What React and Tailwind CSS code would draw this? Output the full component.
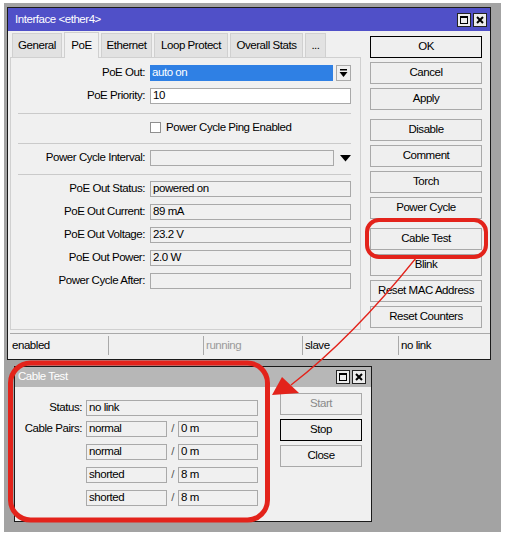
import React from 'react';

const font =
  "font-['Liberation_Sans',Arial,sans-serif] text-[11.5px] tracking-[-0.45px] leading-none whitespace-nowrap";

const Btn = ({ children, def, dim }) => (
  <div
    className={`h-[22px] flex items-center justify-center border bg-[#efefef] ${
      def ? 'border-black' : 'border-[#a9a9a9]'
    } ${dim ? 'text-[#8a8a8a]' : 'text-black'}`}
  >
    {children}
  </div>
);

const Field = ({ children, className = '', white }) => (
  <div
    className={`h-[16px] flex items-center px-[2px] border border-[#a9a9a9] ${
      white ? 'bg-white' : 'bg-[#f0f0f0]'
    } ${className}`}
  >
    {children}
  </div>
);

const WinButtons = () => (
  <div className="flex gap-[2px]">
    <div className="w-[14px] h-[14px] border border-[#222] bg-[#ececec] flex items-center justify-center">
      <div className="w-[8px] h-[8px] border border-black border-t-2" />
    </div>
    <div className="w-[14px] h-[14px] border border-[#222] bg-[#ececec] flex items-center justify-center">
      <svg width="8" height="8" viewBox="0 0 8 8">
        <path d="M1 1L7 7M7 1L1 7" stroke="#000" strokeWidth="2" />
      </svg>
    </div>
  </div>
);

const Sep = () => <div className="ml-[7px] w-[333px] h-px bg-[#cacaca]" />;

const Row = ({ label, children, className = '' }) => (
  <div className={`flex items-center ${className}`}>
    <div className="w-[135px] text-right pr-[1px]">{label}</div>
    <div className="ml-[4px] flex items-center">{children}</div>
  </div>
);

const tabs = [
  ['General', 50],
  ['PoE', 35],
  ['Ethernet', 51],
  ['Loop Protect', 74],
  ['Overall Stats', 73],
  ['...', 21],
];

const actions = [
  ['OK', 0, true],
  ['Cancel', 4],
  ['Apply', 4],
  ['Disable', 9],
  ['Comment', 4],
  ['Torch', 4],
  ['Power Cycle', 4],
  ['Cable Test', 9],
  ['Blink', 4],
  ['Reset MAC Address', 4],
  ['Reset Counters', 4],
];

const readouts = [
  ['PoE Out Status:', 'powered on'],
  ['PoE Out Current:', '89 mA'],
  ['PoE Out Voltage:', '23.2 V'],
  ['PoE Out Power:', '2.0 W'],
  ['Power Cycle After:', ''],
];

const pairs = [
  ['normal', '0 m'],
  ['normal', '0 m'],
  ['shorted', '8 m'],
  ['shorted', '8 m'],
];

const statusCells = [
  ['enabled', 98],
  ['', 95],
  ['running', 99, true],
  ['slave', 96],
  ['no link', 90],
];

export default function App() {
  return (
    <div className={`relative w-[506px] h-[533px] bg-white ${font}`}>
      <div className="absolute left-[4px] top-[3px] w-[497px] h-[529px] bg-[#a3a3a3]" />
      <div className="relative pl-[7px] pt-[7px]">
        {/* interface window */}
        <div className="w-[484px] h-[353px] border border-[#1a1a1a] bg-[#f0f0f0] flex flex-col">
          <div className="h-[23px] bg-[#5050c8] flex items-center justify-between pl-[7px] pr-[3px]">
            <span className="text-white">Interface &lt;ether4&gt;</span>
            <WinButtons />
          </div>
          <div className="flex-1 flex flex-col pl-[2px] pt-[2px]">
            <div className="flex">
              <div className="w-[351px]">
                <div className="flex h-[24px] pl-[2px] gap-[2px] items-end">
                  {tabs.map(([t, w]) => (
                    <div
                      key={t}
                      style={{ width: w }}
                      className={`flex items-center justify-center border border-b-0 border-[#d0d0d0] ${
                        t === 'PoE'
                          ? 'h-[26px] -mb-px bg-[#f0f0f0] relative z-10'
                          : 'h-[24px] bg-[#e2e2e2]'
                      }`}
                    >
                      {t}
                    </div>
                  ))}
                </div>
                <div className="h-[273px] border border-[#d0d0d0] bg-[#f0f0f0]">
                  <Row label="PoE Out:" className="mt-[7px]">
                    <div className="w-[183px] h-[16px] bg-[#2f80e4] text-white flex items-center px-[2px]">
                      auto on
                    </div>
                    <div className="ml-[3px] w-[15px] h-[16px] border border-[#a9a9a9] bg-[#f0f0f0] flex items-center justify-center">
                      <svg width="9" height="9" viewBox="0 0 9 9">
                        <rect x="1" y="0" width="7" height="1.5" fill="#000" />
                        <path d="M0.5 3H8.5L4.5 8Z" fill="#000" />
                      </svg>
                    </div>
                  </Row>
                  <Row label="PoE Priority:" className="mt-[7px]">
                    <Field white className="w-[201px]">10</Field>
                  </Row>
                  <div className="mt-[9px]">
                    <Sep />
                  </div>
                  <div className="mt-[8px] flex items-center pl-[139px] h-[11px]">
                    <div className="w-[11px] h-[11px] border border-[#8f8f8f] bg-white" />
                    <span className="ml-[5px]">Power Cycle Ping Enabled</span>
                  </div>
                  <div className="mt-[10px]">
                    <Sep />
                  </div>
                  <Row label="Power Cycle Interval:" className="mt-[6px]">
                    <Field className="w-[184px]" />
                    <svg className="ml-[6px]" width="11" height="7" viewBox="0 0 11 7">
                      <path d="M0 0H11L5.5 6.5Z" fill="#000" />
                    </svg>
                  </Row>
                  <div className="mt-[8px]">
                    <Sep />
                  </div>
                  <div className="mt-[6px] flex flex-col gap-[7px]">
                    {readouts.map(([l, v]) => (
                      <Row key={l} label={l}>
                        <Field className="w-[201px]">{v}</Field>
                      </Row>
                    ))}
                  </div>
                </div>
              </div>
              <div className="ml-[9px] w-[112px] pt-[3px] flex flex-col">
                {actions.map(([t, gap, def]) => (
                  <div key={t} style={{ marginTop: gap }}>
                    <Btn def={def}>{t}</Btn>
                  </div>
                ))}
              </div>
            </div>
            <div className="mt-[3px] flex h-[22px] border-t border-[#a9a9a9] pt-[2px]">
              {statusCells.map(([t, w, dim], i) => (
                <div
                  key={i}
                  style={{ width: w }}
                  className={`h-[19px] flex items-center px-[2px] border-l border-[#a9a9a9] ${
                    i === 0 ? 'border-l-0' : ''
                  } ${dim ? 'text-[#9a9a9a]' : ''}`}
                >
                  {t}
                </div>
              ))}
            </div>
          </div>
        </div>

        {/* cable test window */}
        <div className="ml-[7px] mt-[6px] w-[358px] h-[156px] border border-[#1a1a1a] bg-[#f0f0f0] flex flex-col">
          <div className="h-[20px] bg-[#b7b7b7] flex items-center justify-between pl-[3px] pr-[5px]">
            <span className="text-white">Cable Test</span>
            <WinButtons />
          </div>
          <div className="flex-1 flex">
            <div className="w-[244px] pt-[13px]">
              <div className="flex items-center">
                <div className="w-[67px] text-right">Status:</div>
                <Field className="ml-[4px] w-[172px]">no link</Field>
              </div>
              <div className="mt-[5px] flex flex-col gap-[7px]">
                {pairs.map(([s, d], i) => (
                  <div key={i} className="flex items-center">
                    <div className="w-[67px] text-right">{i === 0 ? 'Cable Pairs:' : ''}</div>
                    <Field className="ml-[4px] w-[81px]">{s}</Field>
                    <span className="w-[11px] text-center text-[#555]">/</span>
                    <Field className="w-[80px]">{d}</Field>
                  </div>
                ))}
              </div>
            </div>
            <div className="ml-[21px] w-[82px] pt-[6px] flex flex-col gap-[4px]">
              <Btn dim>Start</Btn>
              <Btn def>Stop</Btn>
              <Btn>Close</Btn>
            </div>
          </div>
        </div>
      </div>

      {/* red markup */}
      <svg className="absolute inset-0 pointer-events-none" width="506" height="533" viewBox="0 0 506 533">
        <rect x="367" y="220" width="119" height="37" rx="12" fill="none" stroke="#e3231b" strokeWidth="4" />
        <rect x="10.5" y="363" width="257" height="157" rx="20" fill="none" stroke="#e3231b" strokeWidth="5" />
        <path d="M416 258 Q 352 338 291 385" fill="none" stroke="#e3231b" strokeWidth="1.3" />
        <path d="M272 395 L282 377 L299 393 Z" fill="#e3231b" />
      </svg>
    </div>
  );
}
